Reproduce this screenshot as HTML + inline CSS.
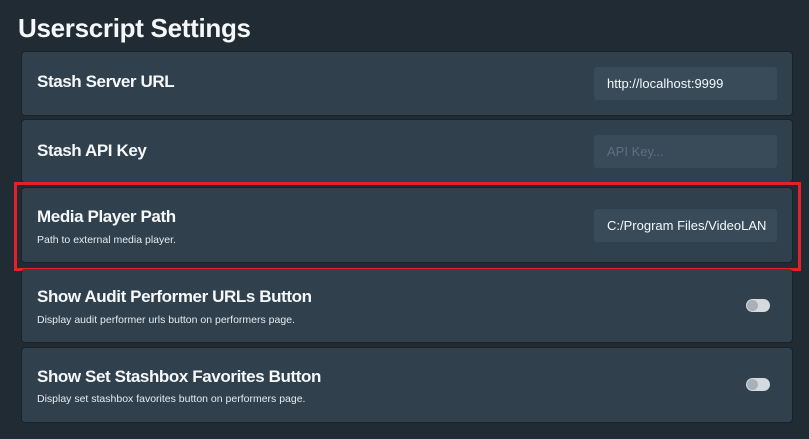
<!DOCTYPE html>
<html><head><style>
body{margin:0;width:809px;height:439px;background:#202b33;font-family:"Liberation Sans",sans-serif;color:#f5f8fa;position:relative;overflow:hidden}
h1{position:absolute;left:18px;top:13px;margin:0;font-size:26px;font-weight:bold;letter-spacing:-0.3px}
.card{position:absolute;left:22px;width:770px;background:#30404d;border-radius:3px;box-shadow:0 0 0 1px rgba(16,22,26,.4)}
.t{position:absolute;left:15px;font-size:17px;font-weight:bold;letter-spacing:-0.4px}
.d{position:absolute;left:15px;font-size:10.5px;color:#e6ebef}
.in{position:absolute;left:572px;width:183px;height:33px;background:#394b59;border-radius:3px;font-size:13px;line-height:33px;padding-left:13px;box-sizing:border-box;white-space:nowrap;overflow:hidden}
.in span{display:inline-block;width:159px;overflow:hidden;vertical-align:top}
.tg{position:absolute;left:724px;width:24px;height:13px;border-radius:7px;background:#d5dadf}
.tg:after{content:"";position:absolute;left:1px;top:1px;width:11px;height:11px;border-radius:50%;background:#a8b0b8}
.red{position:absolute;left:14px;top:182px;width:781px;height:83px;border:3px solid #e5202b}
</style></head><body>
<h1>Userscript Settings</h1>
<div class="card" style="top:52px;height:63px"><div class="t" style="top:20px">Stash Server URL</div><div class="in" style="top:15px">http://localhost:9999</div></div>
<div class="card" style="top:120px;height:62px"><div class="t" style="top:21px">Stash API Key</div><div class="in" style="top:15px;color:#5c7080">API Key...</div></div>
<div class="card" style="top:188px;height:74px"><div class="t" style="top:19px">Media Player Path</div><div class="d" style="top:46px">Path to external media player.</div><div class="in" style="top:21px"><span>C:/Program Files/VideoLAN</span></div></div>
<div class="red"></div>
<div class="card" style="top:270px;height:72px"><div class="t" style="top:17px">Show Audit Performer URLs Button</div><div class="d" style="top:44px">Display audit performer urls button on performers page.</div><div class="tg" style="top:29px"></div></div>
<div class="card" style="top:348px;height:74px"><div class="t" style="top:19px">Show Set Stashbox Favorites Button</div><div class="d" style="top:45px">Display set stashbox favorites button on performers page.</div><div class="tg" style="top:30px"></div></div>
</body></html>
